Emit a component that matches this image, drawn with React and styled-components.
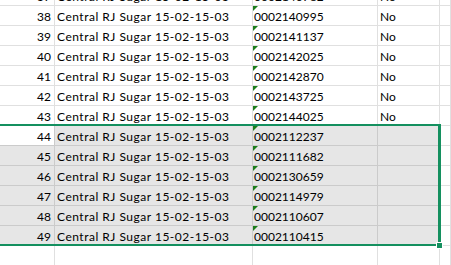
import styled, { createGlobalStyle } from "styled-components";

const rows = [
    { n: 37, code: "0002140782", flag: "No" },
    { n: 38, code: "0002140995", flag: "No" },
    { n: 39, code: "0002141137", flag: "No" },
    { n: 40, code: "0002142025", flag: "No" },
    { n: 41, code: "0002142870", flag: "No" },
    { n: 42, code: "0002143725", flag: "No" },
    { n: 43, code: "0002144025", flag: "No" },
    { n: 44, code: "0002112237", flag: "" },
    { n: 45, code: "0002111682", flag: "" },
    { n: 46, code: "0002130659", flag: "" },
    { n: 47, code: "0002114979", flag: "" },
    { n: 48, code: "0002110607", flag: "" },
    { n: 49, code: "0002110415", flag: "" },
];

const isSelected = (n) => n >= 44 && n <= 49;

const App = () => {
    return (
        <>
        <GlobalStyle />
        <Sheet>
            {rows.map((r) => {
                const sel = isSelected(r.n);
                return (
                    <Row key={r.n}>
                        <Cell $align="right" $selected={sel} $active={r.n === 44}>{r.n}</Cell>
                        <Cell $selected={sel} $wide>Central RJ Sugar 15-02-15-03</Cell>
                        <Cell $selected={sel} $flag>{r.code}</Cell>
                        <Cell $selected={sel}>{r.flag}</Cell>
                        <Cell />
                    </Row>
                );
            })}
            <Row>
                <Cell />
                <Cell />
                <Cell />
                <Cell />
                <Cell />
            </Row>
            <Selection>
                <FillHandle />
            </Selection>
        </Sheet>
        </>
    )
}

const GlobalStyle = createGlobalStyle`
    html, body {
        margin: 0;
        padding: 0;
        background: #ffffff;
        overflow: hidden;
    }
    body {
        width: 451px;
        height: 265px;
    }
`

const Sheet = styled.div`
    position: relative;
    margin-top: -14px;
    display: flex;
    flex-direction: column;
    font-family: Lato, "Liberation Sans", sans-serif;
    font-size: 12px;
    color: #000000;
`

const Row = styled.div`
    display: grid;
    grid-template-columns: 55px 198px 125px 62px 1fr;
    height: 20px;
`

const Cell = styled.div`
    position: relative;
    box-sizing: border-box;
    display: flex;
    align-items: flex-end;
    justify-content: ${(p) => (p.$align === "right" ? "flex-end" : "flex-start")};
    padding: 0 3px 1px ${(p) => (p.$flag ? "1px" : "2px")};
    line-height: 15px;
    letter-spacing: ${(p) => (p.$wide ? "0.5px" : "0")};
    white-space: nowrap;
    overflow: visible;
    background: ${(p) => (p.$selected && !p.$active ? "#e6e6e6" : "#ffffff")};
    border-right: 1px solid ${(p) => (p.$selected ? "#cbcbcb" : "#e0e0e0")};
    border-bottom: 1px solid ${(p) => (p.$selected ? "#cbcbcb" : "#e0e0e0")};

    ${(p) => p.$flag && `
        &::before {
            content: "";
            position: absolute;
            left: 0;
            top: 0;
            border-top: 5px solid #1b7d1b;
            border-right: 5px solid transparent;
        }
    `}
`

const Selection = styled.div`
    position: absolute;
    box-sizing: border-box;
    left: -4px;
    top: 138px;
    width: 445px;
    height: 122px;
    border: 2px solid #14905f;
    border-right-width: 3px;
    pointer-events: none;
`

const FillHandle = styled.div`
    position: absolute;
    right: -5px;
    bottom: -5px;
    width: 5px;
    height: 5px;
    background: #14905f;
    border: 1px solid #ffffff;
`

export default App
